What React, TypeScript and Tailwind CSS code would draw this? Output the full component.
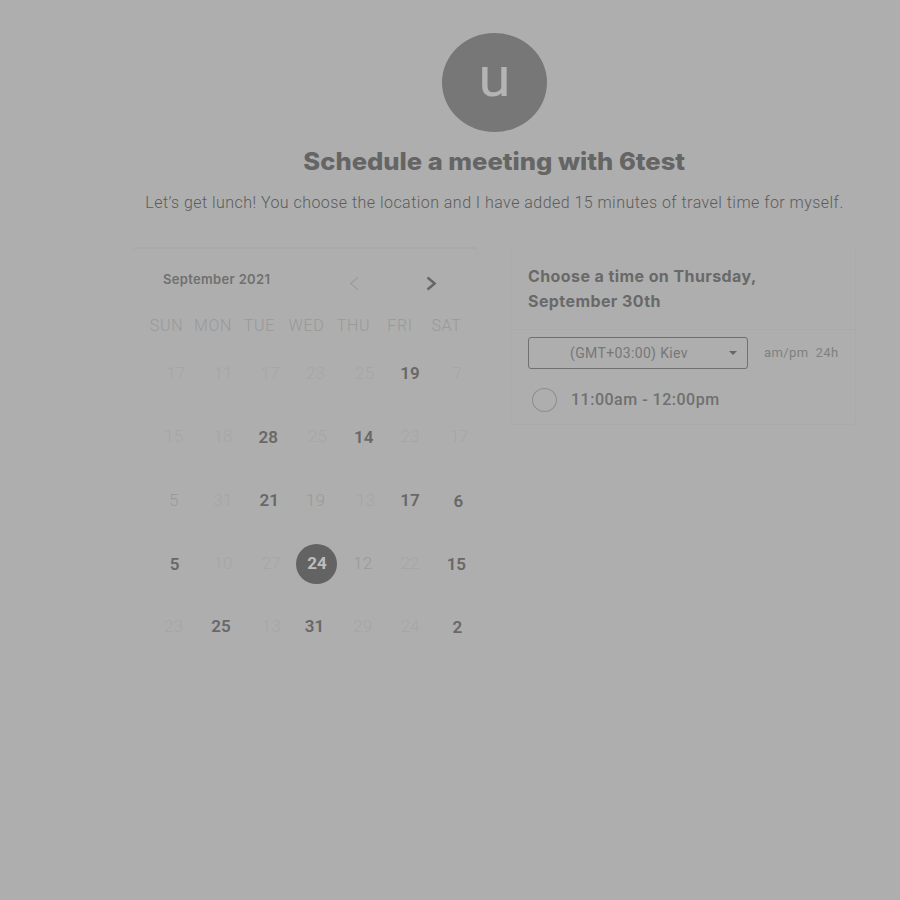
import React from "react";

type Tone = "faint" | "soft" | "bold" | "selected";
// label, tone, horizontal nudge, vertical nudge
type Day = [string, Tone, number, number];

const weeks: Day[][] = [
  [["17", "faint", 1, 0], ["11", "faint", 1, 0], ["17", "faint", 1, 0], ["23", "faint", -1, 0], ["25", "faint", 1, 0], ["19", "bold", -1, 0], ["7", "faint", -1, 0]],
  [["15", "faint", -1, 0], ["18", "faint", 1, 0], ["28", "bold", -1, 1], ["25", "faint", 1, 0], ["14", "bold", 0, 1], ["23", "faint", -1, 0], ["17", "faint", 1, 0]],
  [["5", "soft", -1, 0], ["31", "faint", 1, 0], ["21", "bold", 0, 0], ["19", "soft", -1, 0], ["13", "faint", 2, 0], ["17", "bold", -1, 0], ["6", "bold", 0, 1]],
  [["5", "bold", 0, 1], ["10", "faint", 1, 0], ["27", "faint", 2, 0], ["24", "selected", 0, -1], ["12", "soft", -1, 0], ["22", "faint", -1, 0], ["15", "bold", -2, 1]],
  [["23", "faint", -1, -1], ["25", "bold", -1, -1], ["13", "faint", 2, -1], ["31", "bold", -2, -1], ["29", "faint", -1, -1], ["24", "faint", -1, -1], ["2", "bold", -1, 0]],
];

const tones: Record<Tone, string> = {
  faint: "font-light text-[#a6a6a6]",
  soft: "font-light text-[#999999]",
  bold: "font-semibold text-[#686868]",
  selected: "font-bold text-[#bdbdbd]",
};

const weekdays = [
  ["SUN", "w-[47px]"],
  ["MON", "w-[46px]"],
  ["TUE", "w-[47px]"],
  ["WED", "w-[47px]"],
  ["THU", "w-[47px]"],
  ["FRI", "w-[46px]"],
  ["SAT", "w-[47px]"],
];

function DayCell({ day }: { day: Day }) {
  const [label, tone, dx, dy] = day;
  return (
    <div className="flex h-10 items-center justify-center">
      <div
        className={
          tone === "selected"
            ? "ml-px mt-[2px] flex h-10 w-[41px] shrink-0 items-center justify-center rounded-[50%] bg-[#636363]"
            : ""
        }
      >
        <span
          className={`block text-[17px] leading-5 ${tones[tone]}`}
          style={{ transform: `translate(${dx}px, ${dy}px)` }}
        >
          {label}
        </span>
      </div>
    </div>
  );
}

function Calendar() {
  return (
    <section className="h-[392px] w-[345px] rounded-t border-x border-t-2 border-x-[#acacac] border-t-[#a9a9a9]">
      <div className="flex h-[58px] items-start pl-[28px] pt-[19px]">
        <h2 className="w-[187px] pl-px font-['Inter',sans-serif] text-[13px] font-semibold leading-[23px] tracking-[0.33px] text-[#707070]">
          September 2021
        </h2>
        <svg className="mt-[8px] h-[15px] w-[10px]" viewBox="0 0 10 15" fill="none" stroke="#9c9c9c" strokeWidth="1.2">
          <path d="M8.8 1.5 1.8 7.5l7 6" />
        </svg>
        <svg className="ml-[67px] mt-[8px] h-[15px] w-[11px]" viewBox="0 0 11 15" fill="none" stroke="#666666" strokeWidth="2.4">
          <path d="m1.5 1.5 7.2 6-7.2 6" />
        </svg>
      </div>
      <div className="flex h-[38px] items-center pl-[9px] text-[16px] font-light tracking-[0.7px] text-[#999999]">
        {weekdays.map(([name, width]) => (
          <div key={name} className={`${width} text-center`}>{name}</div>
        ))}
      </div>
      <div className="ml-[17px] mt-[8px] flex w-[331px] flex-col gap-[23.4px]">
        {weeks.map((week, i) => (
          <div key={i} className="grid h-10 grid-cols-7">
            {week.map((day, j) => (
              <DayCell key={j} day={day} />
            ))}
          </div>
        ))}
      </div>
    </section>
  );
}

function TimePicker() {
  return (
    <section className="h-[178px] w-[346px] rounded-sm border border-[#aaaaaa] border-t-[#adadad]">
      <h2 className="h-[82px] border-b border-[#aaaaaa] pl-[17px] pt-[16px] font-['Inter',sans-serif] text-[16px] font-bold leading-[25px] tracking-[0.41px] text-[#696969]">
        Choose a time on Thursday,
        <br />
        September 30th
      </h2>
      <div className="mt-[7px] flex items-center pl-[17px]">
        <div className="flex h-8 w-[220px] items-center rounded-[3px] border border-[#707070] pl-[41px] text-[#777777]">
          <span className="w-[159px] text-[14px] tracking-[0.36px]">(GMT+03:00) Kiev</span>
          <svg className="h-1 w-2" viewBox="0 0 8 4" fill="#666666">
            <path d="M0 0h8L4 4z" />
          </svg>
        </div>
        <div className="ml-[16px] flex gap-[7px] text-[13px] tracking-[0.4px] text-[#808080]">
          <span>am/pm</span>
          <span>24h</span>
        </div>
      </div>
      <div className="mt-[19px] flex items-center pl-[21px]">
        <span className="h-[24px] w-[25px] rounded-[50%] border border-[#8e8e8e]" />
        <span className="ml-[14px] text-[16px] font-medium tracking-[0.5px] text-[#707070]">11:00am - 12:00pm</span>
      </div>
    </section>
  );
}

export default function App() {
  return (
    <main className="h-[900px] w-[900px] overflow-hidden bg-[#aeaeae] font-['Roboto',sans-serif]">
      <header className="ml-[89px] flex w-[811px] flex-col items-center pt-[33px]">
        <div className="flex h-[99px] w-[105px] items-center justify-center rounded-[50%] bg-[#777777]">
          <span className="scale-x-[1.05] pb-[11px] text-[56px] font-[450] leading-none text-[#b4b4b4]">u</span>
        </div>
        <h1 className="mt-[14px] scale-x-[1.065] whitespace-nowrap font-['Inter',sans-serif] text-[24px] font-extrabold leading-[32px] text-[#656565]">
          Schedule a meeting with 6test
        </h1>
        <p className="mt-[13px] whitespace-nowrap text-[16px] font-light leading-6 tracking-[0.46px] text-[#5c5c5c]">
          Let’s get lunch! You choose the location and I have added 15 minutes of travel time for myself.
        </p>
      </header>
      <div className="ml-[133px] mt-[32px] flex items-start gap-[32px]">
        <Calendar />
        <TimePicker />
      </div>
    </main>
  );
}
